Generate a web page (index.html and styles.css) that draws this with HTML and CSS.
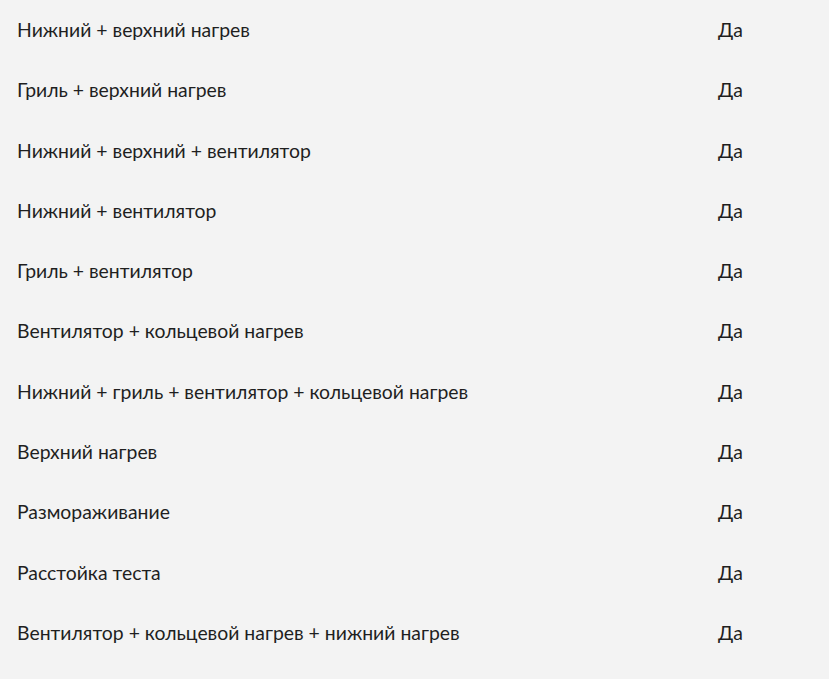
FILE: index.html
```html
<!DOCTYPE html>
<html lang="ru">
<head>
<meta charset="utf-8">
<link rel="stylesheet" href="styles.css">
</head>
<body>
<div class="specs">
  <div class="row"><div class="name">Нижний + верхний нагрев</div><div class="val">Да</div></div>
  <div class="row"><div class="name">Гриль + верхний нагрев</div><div class="val">Да</div></div>
  <div class="row"><div class="name">Нижний + верхний + вентилятор</div><div class="val">Да</div></div>
  <div class="row"><div class="name">Нижний + вентилятор</div><div class="val">Да</div></div>
  <div class="row"><div class="name">Гриль + вентилятор</div><div class="val">Да</div></div>
  <div class="row"><div class="name">Вентилятор + кольцевой нагрев</div><div class="val">Да</div></div>
  <div class="row"><div class="name">Нижний + гриль + вентилятор + кольцевой нагрев</div><div class="val">Да</div></div>
  <div class="row"><div class="name">Верхний нагрев</div><div class="val">Да</div></div>
  <div class="row"><div class="name">Размораживание</div><div class="val">Да</div></div>
  <div class="row"><div class="name">Расстойка теста</div><div class="val">Да</div></div>
  <div class="row"><div class="name">Вентилятор + кольцевой нагрев + нижний нагрев</div><div class="val">Да</div></div>
</div>
</body>
</html>
```
FILE: styles.css
```css
html, body {
  margin: 0;
  padding: 0;
  background: #f3f3f3;
}
body {
  font-family: Lato, "Noto Sans", sans-serif;
  font-size: 19.4px;
  color: #1f1f1f;
}
.specs {
  padding-left: 17px;
}
.row {
  display: grid;
  grid-template-columns: 701px 1fr;
  padding: 20px 0;
  line-height: 20.3px;
}
```
